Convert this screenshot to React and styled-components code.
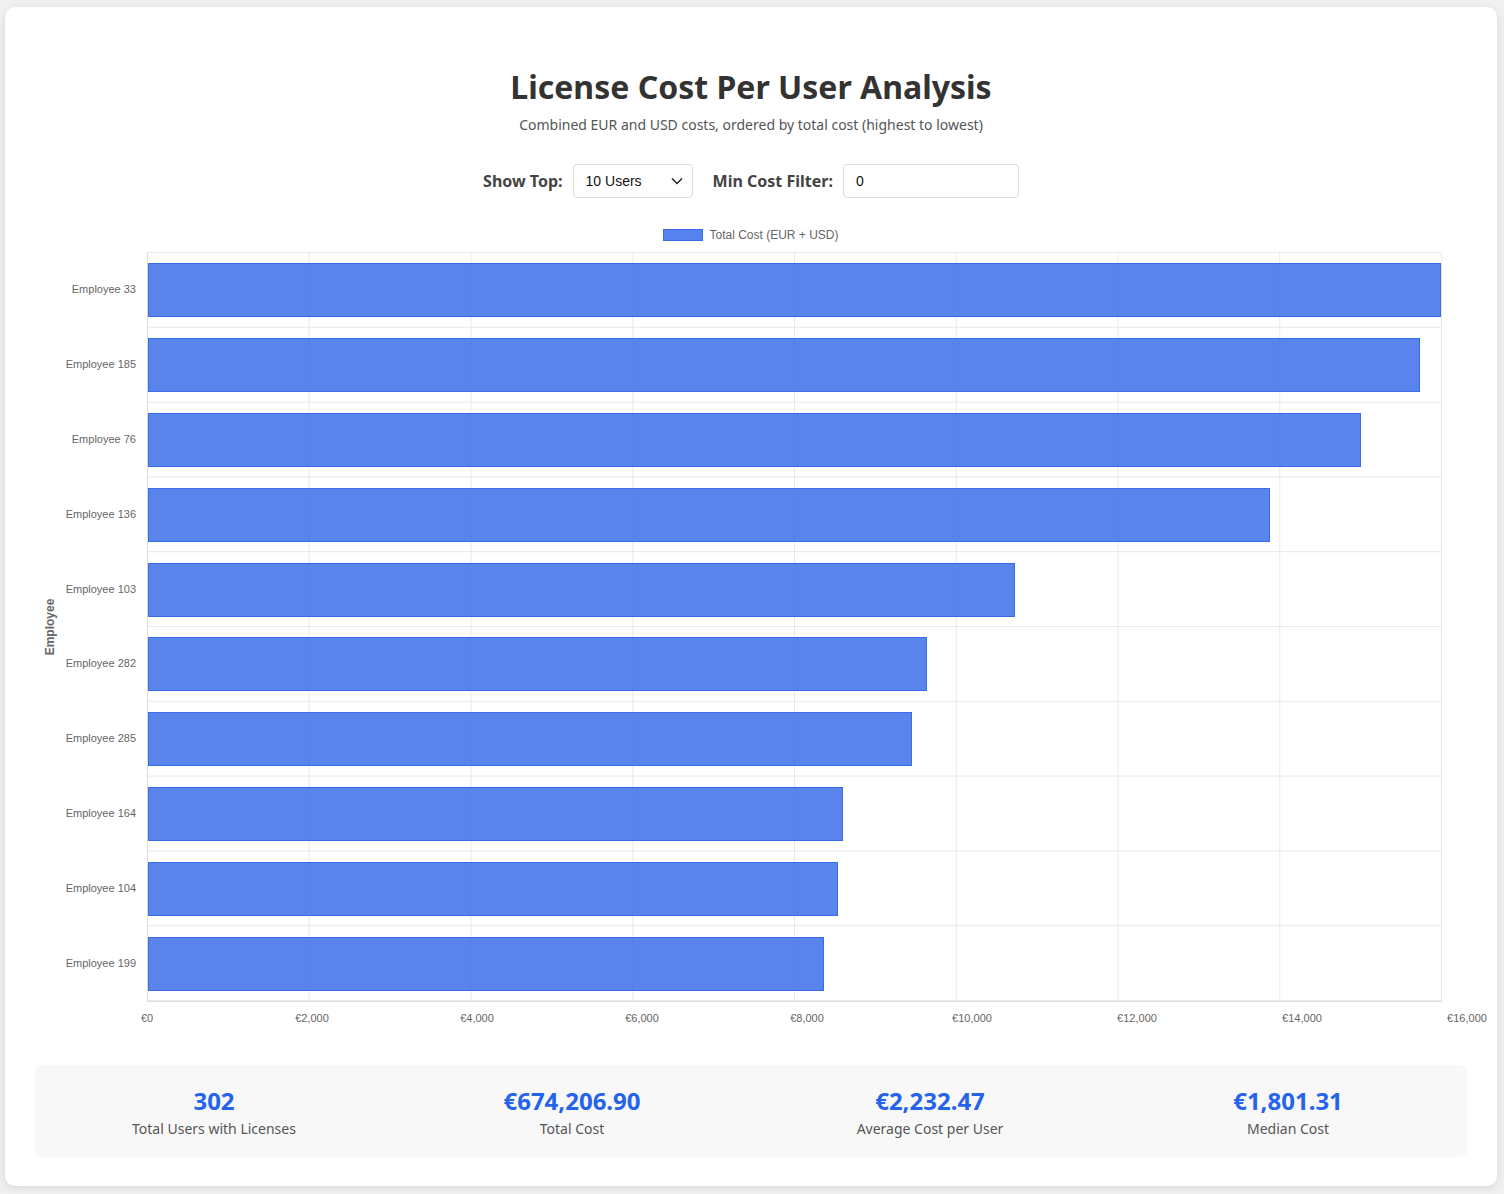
import React from "react";
import styled, { createGlobalStyle } from "styled-components";

const Global = createGlobalStyle`
  body { margin: 0; background: #f0f0f0; font-family: "Noto Sans", "DejaVu Sans", sans-serif; }
`;

const Page = styled.div`
  padding: 7px 7px 8px 5px;
`;

const Card = styled.div`
  background: #fff;
  border-radius: 10px;
  box-shadow: 0 2px 8px rgba(0,0,0,0.1);
  padding: 58px 30px 31px 30px;
  height: 1179px;
  box-sizing: border-box;
`;

const Title = styled.h1`
  margin: 0;
  text-align: center;
  font-size: 32px;
  line-height: 44px;
  font-weight: 700;
  color: #333;
`;

const Subtitle = styled.p`
  margin: 6px 0 0;
  text-align: center;
  font-size: 14px;
  color: #555;
`;

const Controls = styled.div`
  display: flex;
  justify-content: center;
  align-items: center;
  gap: 10px;
  margin-top: 30px;
`;

const Label = styled.label`
  font-size: 16px;
  font-weight: 700;
  color: #444;
  margin-left: ${p => (p.$gap ? "10px" : "0")};
`;

const Field = styled.div`
  width: ${p => p.$w}px;
  height: 34px;
  box-sizing: border-box;
  border: 1px solid #ddd;
  border-radius: 4px;
  display: flex;
  align-items: center;
  justify-content: space-between;
  padding: 0 8px 0 12px;
  font-family: "Liberation Sans", Arial, sans-serif;
  font-size: 14px;
  color: #111;
`;

const Legend = styled.div`
  display: flex;
  justify-content: center;
  align-items: center;
  gap: 6px;
  margin-top: 30px;
  font-family: "Liberation Sans", Arial, sans-serif;
  font-size: 12px;
  color: #666;
`;

const Swatch = styled.span`
  width: 40px;
  height: 12px;
  box-sizing: border-box;
  background: #5582ee;
  border: 1px solid #3b6ce8;
`;

const ChartWrap = styled.div`
  display: grid;
  grid-template-columns: 30px 82px 1295px;
  margin-top: 10px;
`;

const AxisTitle = styled.div`
  display: flex;
  align-items: center;
  justify-content: center;
  font-family: "Liberation Sans", Arial, sans-serif;
  font-size: 12px;
  font-weight: 700;
  color: #666;
  span { transform: rotate(-90deg); white-space: nowrap; }
`;

const YLabels = styled.div`
  display: grid;
  grid-template-rows: repeat(10, 74.8px);
`;

const YLabel = styled.div`
  display: flex;
  align-items: center;
  justify-content: flex-end;
  padding-right: 11px;
  font-family: "Liberation Sans", Arial, sans-serif;
  font-size: 11px;
  color: #666;
`;

const Plot = styled.div`
  display: grid;
  grid-template-rows: repeat(10, 74.8px);
  border-left: 1px solid #ddd;
  border-bottom: 1px solid #ddd;
  background-image:
    linear-gradient(to right, #e8e8e8 1px, transparent 1px),
    linear-gradient(to bottom, #e8e8e8 1px, transparent 1px);
  background-size: 161.75px 100%, 100% 74.8px;
  background-position: -1px 0, 0 -1px;
  border-right: 1px solid #e8e8e8;
  border-top: 1px solid #e8e8e8;
`;

const Row = styled.div`
  display: flex;
  align-items: center;
`;

const Bar = styled.div`
  height: 54px;
  box-sizing: border-box;
  background: rgba(59, 110, 233, 0.85);
  border: 1px solid #3b6ce8;
`;

const XAxis = styled.div`
  display: flex;
  justify-content: space-between;
  margin: 10px -20px 0 92px;
  font-family: "Liberation Sans", Arial, sans-serif;
  font-size: 11px;
  color: #666;
  span { width: 40px; text-align: center; }
`;

const Stats = styled.div`
  display: grid;
  grid-template-columns: repeat(4, 1fr);
  background: #f8f8f8;
  border-radius: 8px;
  margin: 41px 0 0;
  padding: 20px 0 19px;
`;

const Stat = styled.div`
  text-align: center;
`;

const StatValue = styled.div`
  font-size: 24px;
  font-weight: 700;
  color: #2563eb;
  line-height: 32px;
`;

const StatLabel = styled.div`
  font-size: 14px;
  color: #555;
  margin-top: 2px;
`;

const data = [
  ["Employee 33", 16000],
  ["Employee 185", 15740],
  ["Employee 76", 15011],
  ["Employee 136", 13885],
  ["Employee 103", 10733],
  ["Employee 282", 9645],
  ["Employee 285", 9459],
  ["Employee 164", 8606],
  ["Employee 104", 8544],
  ["Employee 199", 8371],
];

const ticks = ["€0", "€2,000", "€4,000", "€6,000", "€8,000", "€10,000", "€12,000", "€14,000", "€16,000"];

const stats = [
  ["302", "Total Users with Licenses"],
  ["€674,206.90", "Total Cost"],
  ["€2,232.47", "Average Cost per User"],
  ["€1,801.31", "Median Cost"],
];

export default function App() {
  return (
    <Page>
      <Global />
      <Card>
        <Title>License Cost Per User Analysis</Title>
        <Subtitle>Combined EUR and USD costs, ordered by total cost (highest to lowest)</Subtitle>
        <Controls>
          <Label>Show Top:</Label>
          <Field $w={120}>
            10 Users
            <svg width="14" height="14" viewBox="0 0 14 14"><path d="M2 4.5l5 5 5-5" fill="none" stroke="#222" strokeWidth="1.5" /></svg>
          </Field>
          <Label $gap>Min Cost Filter:</Label>
          <Field $w={176}>0<span /></Field>
        </Controls>
        <Legend><Swatch />Total Cost (EUR + USD)</Legend>
        <ChartWrap>
          <AxisTitle><span>Employee</span></AxisTitle>
          <YLabels>
            {data.map(([n]) => <YLabel key={n}>{n}</YLabel>)}
          </YLabels>
          <Plot>
            {data.map(([n, v]) => (
              <Row key={n}><Bar style={{ width: `${(v / 16000) * 100}%` }} /></Row>
            ))}
          </Plot>
        </ChartWrap>
        <XAxis>{ticks.map(t => <span key={t}>{t}</span>)}</XAxis>
        <Stats>
          {stats.map(([v, l]) => (
            <Stat key={l}><StatValue>{v}</StatValue><StatLabel>{l}</StatLabel></Stat>
          ))}
        </Stats>
      </Card>
    </Page>
  );
}
